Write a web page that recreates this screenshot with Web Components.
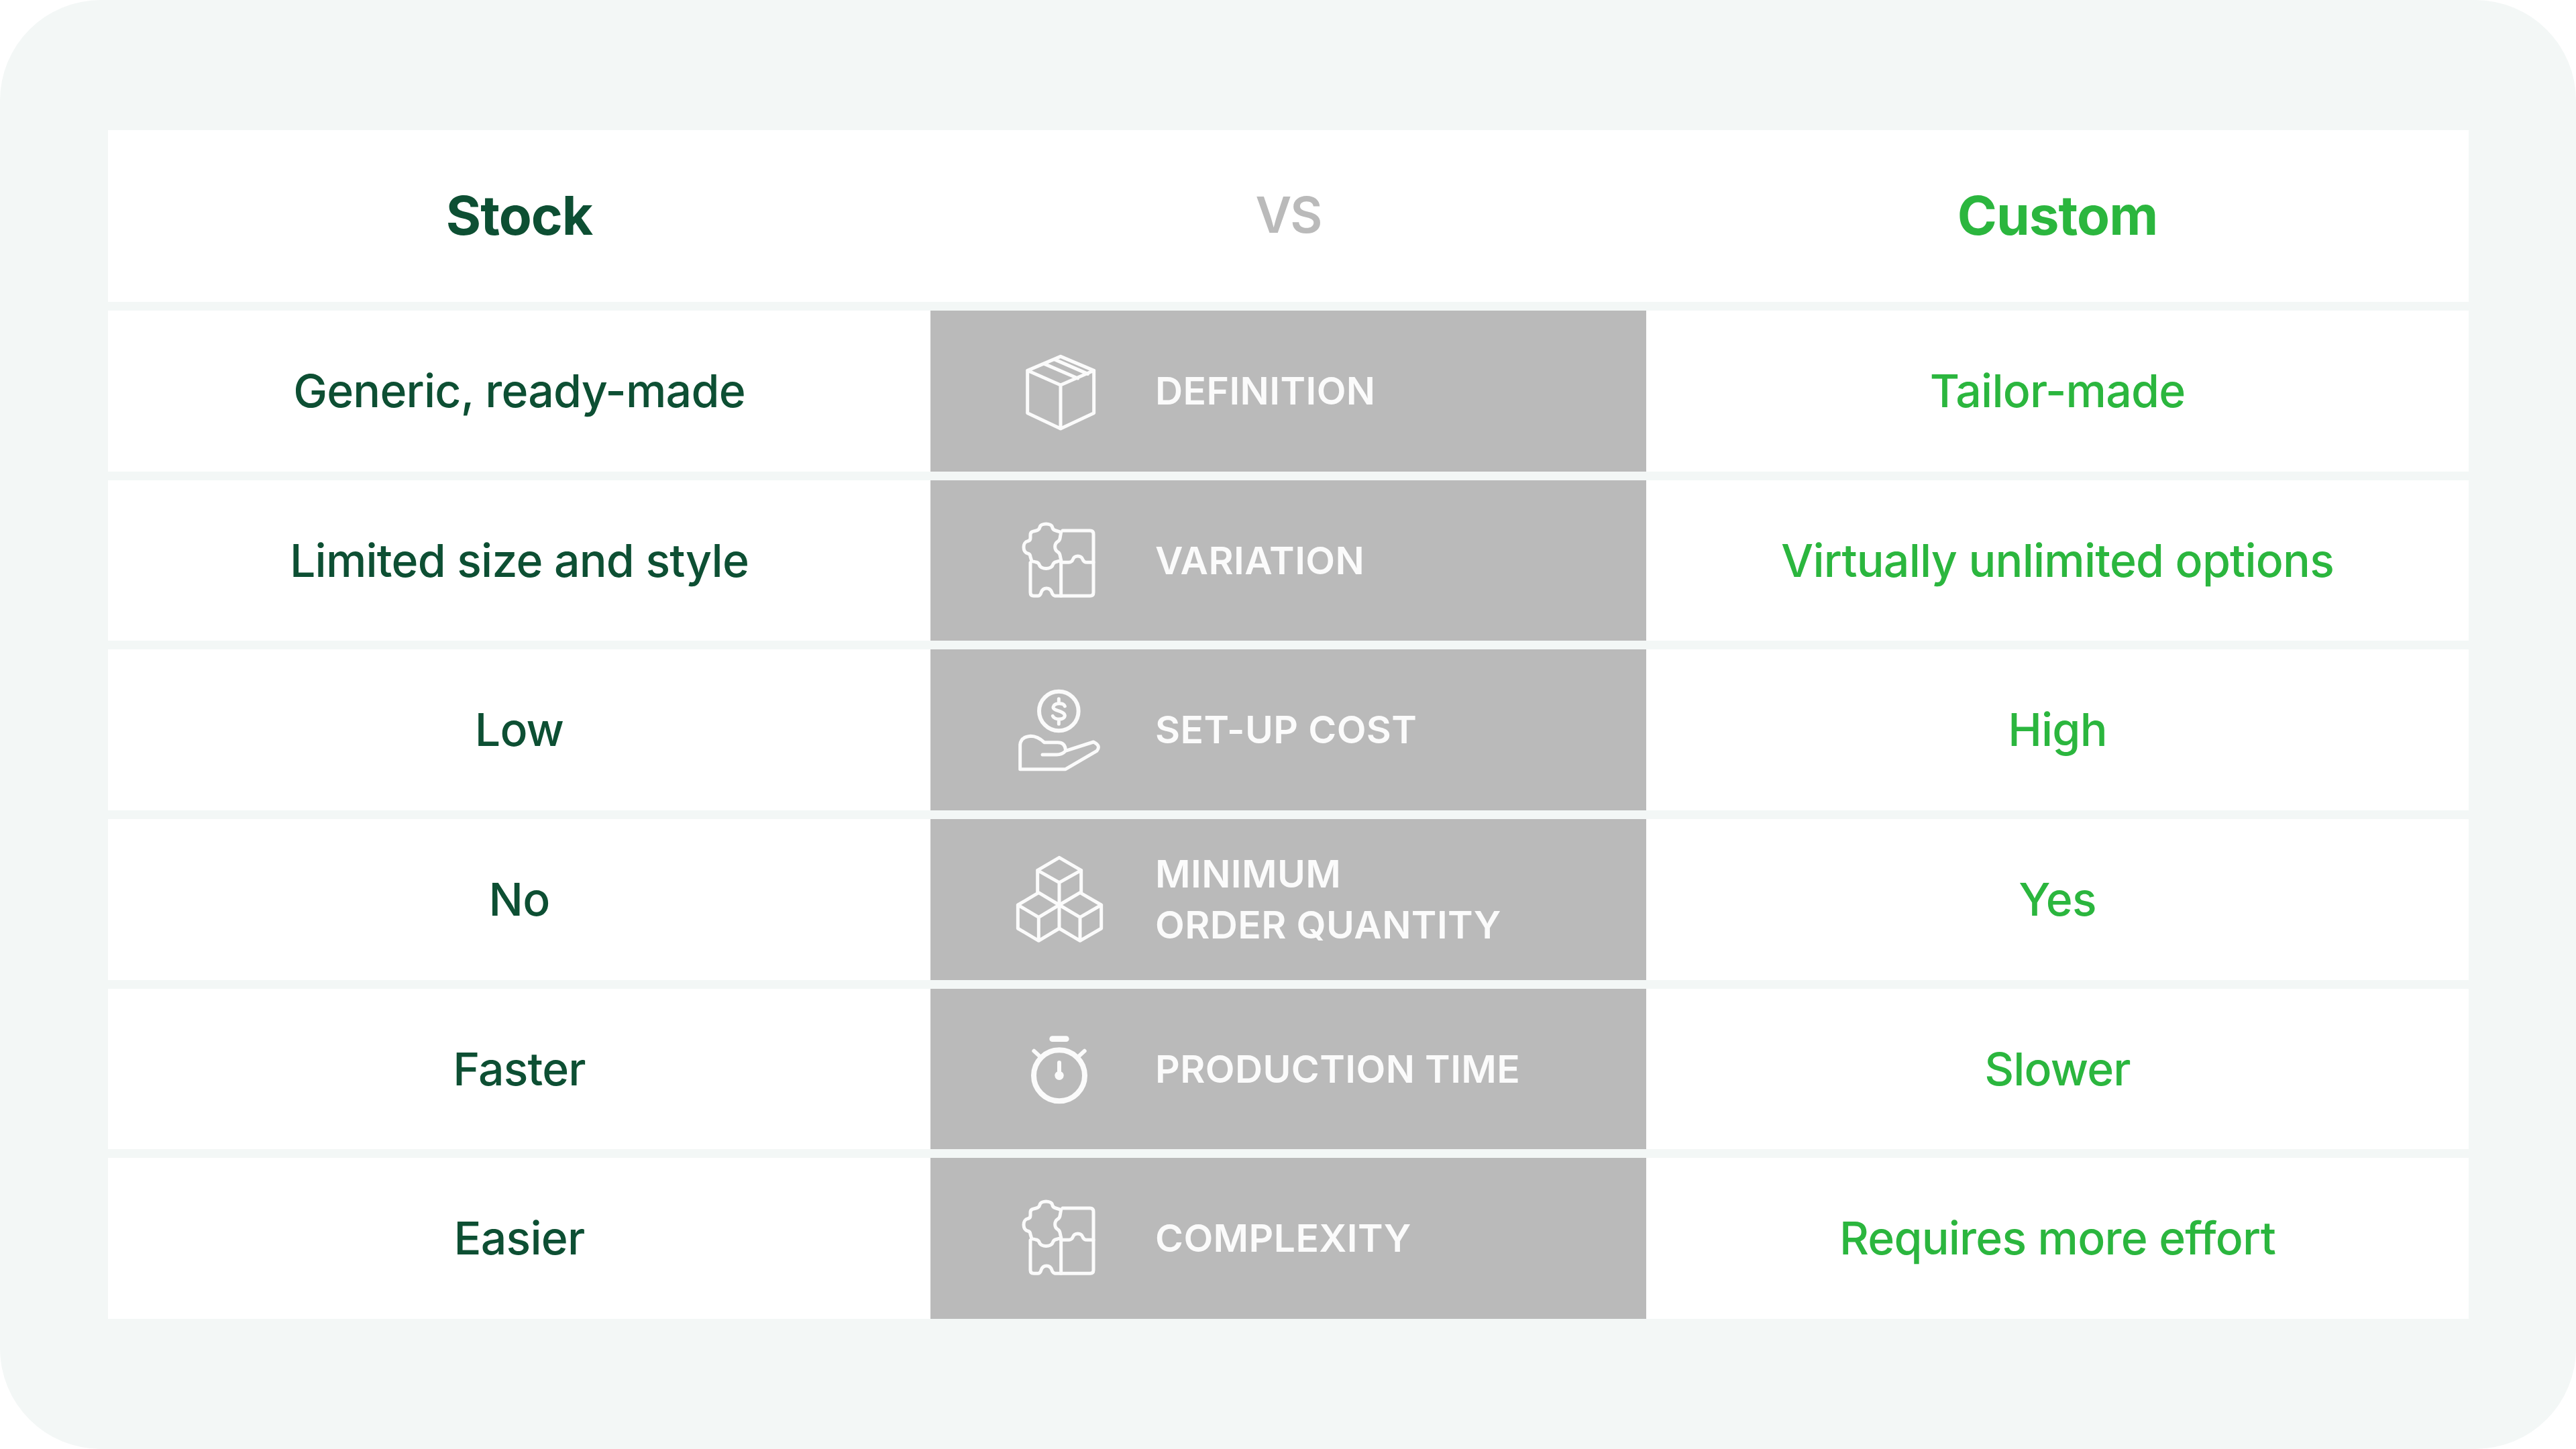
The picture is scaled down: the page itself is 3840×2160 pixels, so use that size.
<!doctype html>
<html lang="en">
<head>
<meta charset="utf-8">
<title>Stock vs Custom</title>
<style>
  html, body { margin: 0; background: #fff; }
</style>
</head>
<body>
<vs-board>
  <vs-row>
    <vs-cell kind="stock" head>Stock</vs-cell>
    <vs-cell kind="vs" head>VS</vs-cell>
    <vs-cell kind="custom" head>Custom</vs-cell>
  </vs-row>
  <vs-row>
    <vs-cell kind="stock">Generic, ready-made</vs-cell>
    <vs-topic icon="box">DEFINITION</vs-topic>
    <vs-cell kind="custom">Tailor-made</vs-cell>
  </vs-row>
  <vs-row>
    <vs-cell kind="stock">Limited size and style</vs-cell>
    <vs-topic icon="puzzle">VARIATION</vs-topic>
    <vs-cell kind="custom">Virtually unlimited options</vs-cell>
  </vs-row>
  <vs-row>
    <vs-cell kind="stock">Low</vs-cell>
    <vs-topic icon="coin">SET-UP COST</vs-topic>
    <vs-cell kind="custom">High</vs-cell>
  </vs-row>
  <vs-row>
    <vs-cell kind="stock">No</vs-cell>
    <vs-topic icon="cubes">MINIMUM<br>ORDER QUANTITY</vs-topic>
    <vs-cell kind="custom">Yes</vs-cell>
  </vs-row>
  <vs-row>
    <vs-cell kind="stock">Faster</vs-cell>
    <vs-topic icon="timer">PRODUCTION TIME</vs-topic>
    <vs-cell kind="custom">Slower</vs-cell>
  </vs-row>
  <vs-row>
    <vs-cell kind="stock">Easier</vs-cell>
    <vs-topic icon="puzzle">COMPLEXITY</vs-topic>
    <vs-cell kind="custom">Requires more effort</vs-cell>
  </vs-row>
</vs-board>

<script>
  /* ── Outer panel with the rounded corners ── */
  class VsBoard extends HTMLElement {
    constructor() {
      super();
      this.attachShadow({ mode: 'open' }).innerHTML = `
        <style>
          :host {
            display: flex;
            flex-direction: column;
            gap: 13px;
            box-sizing: border-box;
            width: 3840px;
            height: 2160px;
            padding: 194px 161px 0;
            background: #f3f7f6;
            border-radius: 150px;
            font-family: Inter, "Liberation Sans", sans-serif;
          }
        </style>
        <slot></slot>`;
    }
  }

  class VsRow extends HTMLElement {
    constructor() {
      super();
      this.attachShadow({ mode: 'open' }).innerHTML = `
        <style>
          :host {
            display: grid;
            grid-template-columns: 1226px 1067px 1226px;
            height: 239.7px;
          }
          :host(:first-child) { height: 256px; }
        </style>
        <slot></slot>`;
    }
  }

  /* Plain text cell, white. kind = stock | custom | vs */
  class VsCell extends HTMLElement {
    constructor() {
      super();
      this.attachShadow({ mode: 'open' }).innerHTML = `
        <style>
          :host {
            display: flex;
            align-items: center;
            justify-content: center;
            box-sizing: border-box;
            padding-bottom: 2px;
            background: #fff;
            font-size: 68px;
            font-weight: 500;
            letter-spacing: -0.8px;
          }
          :host([kind=stock])  { color: #0d4f33; }
          :host([kind=custom]) { color: #2bb63e; }
          :host([kind=vs])     { color: #bababa; }
          :host([head]) { font-size: 80px; font-weight: 700; letter-spacing: -1px; padding-bottom: 4px; }
          :host([kind=vs][head]) { font-size: 74px; font-weight: 600; letter-spacing: -2px; }
        </style>
        <slot></slot>`;
    }
  }

  /* Icons: coordinates come from the reference crops, hence the odd viewBoxes */
  const ICONS = {
    box: `<svg viewBox="360 127 480 480">
      <path d="M603 212 752 275 603 340 455 275Z M455 275V465L603 535 752 465V275 M603 340V535 M530 245 680 310 M575 225 725 290"/></svg>`,
    puzzle: `<svg viewBox="360 888 480 480" stroke-width="11">
      <path d="M605 1000 582 993Q568 990 566 978C562 958 514 958 510 978 508 990 494 993 494 993L478 997Q468 1000 468 1012V1026Q468 1038 456 1040C432 1045 432 1090 456 1095 468 1097 468 1110 468 1110L474 1130 490 1133Q504 1134 508 1146C514 1168 562 1168 568 1146 572 1134 586 1132 586 1132L605 1125 600 1102Q598 1092 590 1088C574 1078 574 1052 590 1042 598 1038 600 1028 600 1028Z"/>
      <path d="M612 993H735Q750 993 750 1008V1135H722Q706 1135 702 1122C695 1102 665 1102 658 1122 654 1135 640 1135 640 1135H605"/>
      <path d="M468 1136V1270Q468 1285 483 1285H500Q512 1285 516 1270C524 1245 556 1245 564 1270 568 1285 582 1285 582 1285H735Q750 1285 750 1270V1135"/>
      <path d="M605 1125V1285"/></svg>`,
    coin: `<svg viewBox="360 144 480 480">
      <circle cx="595" cy="300" r="88" stroke-width="18"/>
      <path d="M622 278C615 262 575 262 570 282 568 300 620 298 622 320 620 342 575 340 568 322M595 245V258M595 342V358"/>
      <path d="M625 472Q622 440 590 440H530Q500 412 470 412 425 415 422 450V560H625L765 478Q785 455 750 438L625 478Q610 495 585 495H522"/></svg>`,
    cubes: `<svg viewBox="360 906 480 480">
      <path d="M597 958 695 1015 597 1070 500 1015Z M500 1015V1115 M695 1015V1115 M597 1070V1275"/>
      <path d="M505 1115 597 1170 505 1225 412 1170Z M412 1170V1275L505 1330 597 1275 690 1330 785 1275V1170L690 1115 597 1170 690 1225 785 1170 M505 1225V1330 M690 1225V1330"/></svg>`,
    timer: `<svg viewBox="360 162 480 480">
      <circle cx="597" cy="430" r="114" stroke-width="24"/>
      <path stroke-width="26" d="M566 266H628"/>
      <path stroke-width="18" d="M484 320 510 344M710 320 684 344"/>
      <path stroke-width="18" d="M597 372V428"/>
      <circle cx="597" cy="430" r="20" fill="#fbfbfb" stroke="none"/></svg>`
  };

  /* Grey middle cell: icon + label */
  class VsTopic extends HTMLElement {
    constructor() {
      super();
      const icon = ICONS[this.getAttribute('icon')] || '';
      this.attachShadow({ mode: 'open' }).innerHTML = `
        <style>
          :host {
            display: flex;
            align-items: center;
            gap: 62px;
            padding-left: 113px;
            background: #bababa;
            color: #fbfbfb;
            font-size: 57px;
            font-weight: 600;
            line-height: 76px;
            letter-spacing: 0.4px;
          }
          svg {
            flex: none;
            width: 160px;
            height: 160px;
            fill: none;
            stroke: #fbfbfb;
            stroke-width: 15;
            stroke-linecap: round;
            stroke-linejoin: round;
          }
        </style>
        ${icon}
        <div><slot></slot></div>`;
    }
  }

  customElements.define('vs-board', VsBoard);
  customElements.define('vs-row', VsRow);
  customElements.define('vs-cell', VsCell);
  customElements.define('vs-topic', VsTopic);
</script>
</body>
</html>
